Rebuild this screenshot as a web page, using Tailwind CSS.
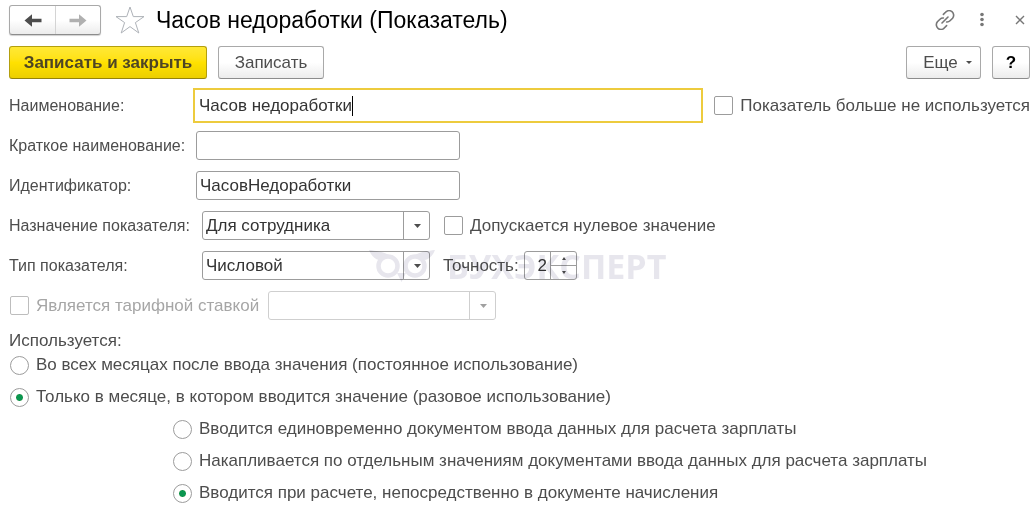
<!DOCTYPE html>
<html lang="ru">
<head>
    <meta charset="UTF-8">
    <meta name="viewport" content="width=device-width, initial-scale=1.0">
    <title>Часов недоработки (Показатель)</title>
    <script src="https://cdn.jsdelivr.net/npm/@tailwindcss/browser@4"></script>
</head>
<body class="bg-white font-['Liberation_Sans',Arial,sans-serif] text-[17px] leading-5 text-[#4d4d4d]">
    <div class="pl-[9px] pr-1.5 pt-[5px] pb-6">
        <!-- Заголовок окна -->
        <header class="flex items-center">
            <div class="flex h-[30px] rounded-[3px] border border-[#a9a9a9] border-b-[#8c8c8c] bg-linear-to-b from-white from-50% to-[#ececec] shadow-[0_1px_1px_#d0d0d0]">
                <button type="button" aria-label="Назад" class="flex w-[46px] items-center justify-center border-r border-[#d4d4d4] text-[#4d4d4d]">
                    <svg width="18" height="13" viewBox="0 0 18 13" fill="currentColor"><path d="M0.5 6.5 8 0.2V4.7H17.5V8.3H8V12.8Z"/></svg>
                </button>
                <button type="button" aria-label="Вперед" class="flex w-11 items-center justify-center text-[#b0b0b0]">
                    <svg width="18" height="13" viewBox="0 0 18 13" fill="currentColor"><path d="M17.5 6.5 10 0.2V4.7H0.5V8.3H10V12.8Z"/></svg>
                </button>
            </div>
            <button type="button" aria-label="В избранное" class="ml-3.5">
                <svg width="30" height="28" viewBox="0 0 30 28" fill="none" stroke="#aeb2b8" stroke-width="1"><path d="M15 1 18.3 10.6H29L20.4 16.6 23.8 27 15 20.6 6.2 27 9.6 16.6 1 10.6H11.7Z"/></svg>
            </button>
            <h1 class="ml-[11px] text-[23px] leading-7 text-black">Часов недоработки (Показатель)</h1>
            <div class="ml-auto flex items-center text-[#777]">
                <button type="button" aria-label="Получить ссылку">
                    <svg width="20" height="20" viewBox="0 0 20 20" fill="none" stroke="currentColor" stroke-width="1.6" stroke-linecap="round"><path d="M8.4 4.4 10.5 2.3A4.3 4.3 0 0 1 17.6 8.2L15 10.8A4.3 4.3 0 0 1 11.6 12M11.6 15.6 9.5 17.7A4.3 4.3 0 0 1 2.4 11.8L5 9.2A4.3 4.3 0 0 1 8.4 8M7 13 13 7"/></svg>
                </button>
                <button type="button" aria-label="Меню" class="ml-6">
                    <svg width="6" height="16" viewBox="0 0 6 16" fill="currentColor"><circle cx="3" cy="2.5" r="1.8"/><circle cx="3" cy="7.5" r="1.8"/><circle cx="3" cy="12.5" r="1.8"/></svg>
                </button>
                <button type="button" aria-label="Закрыть" class="mr-[5px] ml-[30px]">
                    <svg width="10" height="10" viewBox="0 0 10 10" fill="none" stroke="currentColor" stroke-width="1.4"><path d="M1 1 9 9M9 1 1 9"/></svg>
                </button>
            </div>
        </header>

        <!-- Командная панель -->
        <div class="mt-[11px] flex">
            <button type="button" class="h-[33px] w-[198px] rounded-[3px] border border-[#b39f0e] border-b-[#94830a] bg-linear-to-b from-[#ffe834] via-[#ffe100] to-[#eccf00] font-bold text-[#4d4525]">Записать и закрыть</button>
            <button type="button" class="ml-[11px] h-[33px] w-[106px] rounded-[3px] border border-[#a9a9a9] border-b-[#8c8c8c] bg-linear-to-b from-white from-50% to-[#ececec]">Записать</button>
            <button type="button" class="ml-auto flex h-[33px] w-[75px] items-center justify-center gap-2 rounded-[3px] border border-[#a9a9a9] border-b-[#8c8c8c] bg-linear-to-b from-white from-50% to-[#ececec] pl-2">
                Еще
                <svg width="6" height="3" viewBox="0 0 6 3" fill="currentColor"><path d="M0 0H6L3 3Z"/></svg>
            </button>
            <button type="button" aria-label="Справка" class="ml-[11px] h-[33px] w-[38px] rounded-[3px] border border-[#a9a9a9] border-b-[#8c8c8c] bg-linear-to-b from-white from-50% to-[#ececec] font-bold text-black">?</button>
        </div>

        <form class="mt-[9px]">
            <div class="flex items-center">
                <label for="name" class="w-[184px] shrink-0 text-base leading-5">Наименование:</label>
                <div class="relative min-w-0 flex-1">
                    <input type="text" id="name" value="Часов недоработки" class="h-[35px] w-full border-2 border-[#edcb3d] bg-white px-1 text-[#333] outline-none">
                    <span class="absolute top-2 left-[159px] h-5 w-px bg-black"></span>
                </div>
                <label class="ml-[11px] flex shrink-0 items-center gap-[7px] whitespace-nowrap">
                    <input type="checkbox" class="size-[19px] appearance-none rounded-[2px] border border-[#9c9c9c] bg-white checked:bg-[#009646]">
                    Показатель больше не используется
                </label>
            </div>

            <div class="mt-2 flex items-center">
                <label for="short" class="w-[187px] shrink-0 text-base leading-5 whitespace-nowrap">Краткое наименование:</label>
                <input type="text" id="short" class="h-[29px] w-[264px] rounded-[3px] border border-[#9c9c9c] bg-white px-[3px] text-[#333] outline-none">
            </div>

            <div class="mt-[11px] flex items-center">
                <label for="ident" class="w-[187px] shrink-0 text-base leading-5">Идентификатор:</label>
                <input type="text" id="ident" value="ЧасовНедоработки" class="h-[29px] w-[264px] rounded-[3px] border border-[#9c9c9c] bg-white px-[3px] text-[#333] outline-none">
            </div>

            <div class="mt-[11px] flex items-center">
                <label for="purpose" class="w-[193px] shrink-0 text-base leading-5 whitespace-nowrap">Назначение показателя:</label>
                <div class="relative w-[228px]">
                    <select id="purpose" class="block h-[29px] w-full appearance-none rounded-[3px] border border-[#9c9c9c] bg-white px-[3px] text-[#333] outline-none">
                        <option>Для сотрудника</option>
                    </select>
                    <span class="pointer-events-none absolute inset-y-0 right-0 flex w-[27px] items-center justify-center border-l border-[#9c9c9c]">
                        <svg width="7" height="4" viewBox="0 0 7 4" fill="#4d4d4d"><path d="M0 0H7L3.5 4Z"/></svg>
                    </span>
                </div>
                <label class="ml-3.5 flex items-center gap-[7px] whitespace-nowrap">
                    <input type="checkbox" class="size-[19px] appearance-none rounded-[2px] border border-[#9c9c9c] bg-white checked:bg-[#009646]">
                    Допускается нулевое значение
                </label>
            </div>

            <div class="relative mt-[11px] flex items-center">
                <label for="type" class="w-[193px] shrink-0 text-base leading-5">Тип показателя:</label>
                <div class="relative w-[228px]">
                    <select id="type" class="block h-[29px] w-full appearance-none rounded-[3px] border border-[#9c9c9c] bg-white px-[3px] text-[#333] outline-none">
                        <option>Числовой</option>
                        <option>Денежный</option>
                    </select>
                    <span class="pointer-events-none absolute inset-y-0 right-0 flex w-[27px] items-center justify-center border-l border-[#9c9c9c]">
                        <svg width="7" height="4" viewBox="0 0 7 4" fill="#4d4d4d"><path d="M0 0H7L3.5 4Z"/></svg>
                    </span>
                </div>
                <label for="precision" class="ml-[13px] w-[81px] shrink-0">Точность:</label>
                <div class="flex h-[29px] w-[53px] rounded-[3px] border border-[#9c9c9c] bg-white">
                    <input type="text" inputmode="numeric" id="precision" value="2" class="min-w-0 flex-1 pr-[3px] text-right text-[#333] outline-none">
                    <div class="flex w-[26px] flex-col border-l border-[#9c9c9c] text-[#4d4d4d]">
                        <button type="button" aria-label="Увеличить" class="flex flex-1 items-center justify-center border-b border-[#9c9c9c]">
                            <svg width="4" height="3" viewBox="0 0 4 3" fill="currentColor"><path d="M0 3H4L2 0Z"/></svg>
                        </button>
                        <button type="button" aria-label="Уменьшить" class="flex flex-1 items-center justify-center">
                            <svg width="4" height="3" viewBox="0 0 4 3" fill="currentColor"><path d="M0 0H4L2 3Z"/></svg>
                        </button>
                    </div>
                </div>
                <!-- Водяной знак -->
                <div class="pointer-events-none absolute inset-y-0 left-[360px] flex items-center gap-3 text-[#e7e6ed] mix-blend-multiply">
                    <svg width="66" height="33" viewBox="0 0 66 33" fill="none" stroke="currentColor">
                        <circle cx="19" cy="17" r="9.5" stroke-width="4.5"/>
                        <circle cx="46" cy="17" r="9.5" stroke-width="4.5"/>
                        <path d="M0 1C7 2 13 2 20 6L10 11C5 10 2 6 0 1ZM66 1C59 2 53 2 46 6L56 11C61 10 64 6 66 1ZM28 24H37L32.5 33Z" fill="currentColor" stroke="none"/>
                    </svg>
                    <span class="font-['Open_Sans',sans-serif] text-[34px] leading-8 font-bold">БУХЭКСПЕРТ</span>
                </div>
            </div>

            <div class="mt-[11px] flex items-center text-[#a6a6a6]">
                <label class="flex w-[259px] shrink-0 items-center gap-[7px] whitespace-nowrap">
                    <input type="checkbox" disabled class="ml-px size-[19px] appearance-none rounded-[2px] border border-[#bdbdbd] bg-white">
                    Является тарифной ставкой
                </label>
                <div class="relative w-[228px]">
                    <select disabled aria-label="Тарифная ставка" class="block h-[29px] w-full appearance-none rounded-[3px] border border-[#cfcfcf] bg-white px-[3px]">
                        <option></option>
                    </select>
                    <span class="pointer-events-none absolute inset-y-0 right-0 flex w-[27px] items-center justify-center border-l border-[#cfcfcf]">
                        <svg width="7" height="4" viewBox="0 0 7 4" fill="#a0a0a0"><path d="M0 0H7L3.5 4Z"/></svg>
                    </span>
                </div>
            </div>

            <fieldset class="mt-[11px]">
                <legend>Используется:</legend>
                <div class="mt-1 flex flex-col items-start gap-3 pl-px">
                    <label class="flex items-center gap-[7px]">
                        <input type="radio" name="usage" class="size-[19px] appearance-none rounded-full border border-[#9c9c9c] bg-white checked:bg-radial checked:from-[#0a9650] checked:from-[3px] checked:to-white checked:to-[4px]">
                        Во всех месяцах после ввода значения (постоянное использование)
                    </label>
                    <label class="flex items-center gap-[7px]">
                        <input type="radio" name="usage" checked class="size-[19px] appearance-none rounded-full border border-[#9c9c9c] bg-white checked:bg-radial checked:from-[#0a9650] checked:from-[3px] checked:to-white checked:to-[4px]">
                        Только в месяце, в котором вводится значение (разовое использование)
                    </label>
                    <div class="flex flex-col items-start gap-3 pl-[163px]">
                        <label class="flex items-center gap-[7px]">
                            <input type="radio" name="input" class="size-[19px] appearance-none rounded-full border border-[#9c9c9c] bg-white checked:bg-radial checked:from-[#0a9650] checked:from-[3px] checked:to-white checked:to-[4px]">
                            Вводится единовременно документом ввода данных для расчета зарплаты
                        </label>
                        <label class="flex items-center gap-[7px]">
                            <input type="radio" name="input" class="size-[19px] appearance-none rounded-full border border-[#9c9c9c] bg-white checked:bg-radial checked:from-[#0a9650] checked:from-[3px] checked:to-white checked:to-[4px]">
                            Накапливается по отдельным значениям документами ввода данных для расчета зарплаты
                        </label>
                        <label class="flex items-center gap-[7px]">
                            <input type="radio" name="input" checked class="size-[19px] appearance-none rounded-full border border-[#9c9c9c] bg-white checked:bg-radial checked:from-[#0a9650] checked:from-[3px] checked:to-white checked:to-[4px]">
                            Вводится при расчете, непосредственно в документе начисления
                        </label>
                    </div>
                </div>
            </fieldset>
        </form>
    </div>
</body>
</html>
